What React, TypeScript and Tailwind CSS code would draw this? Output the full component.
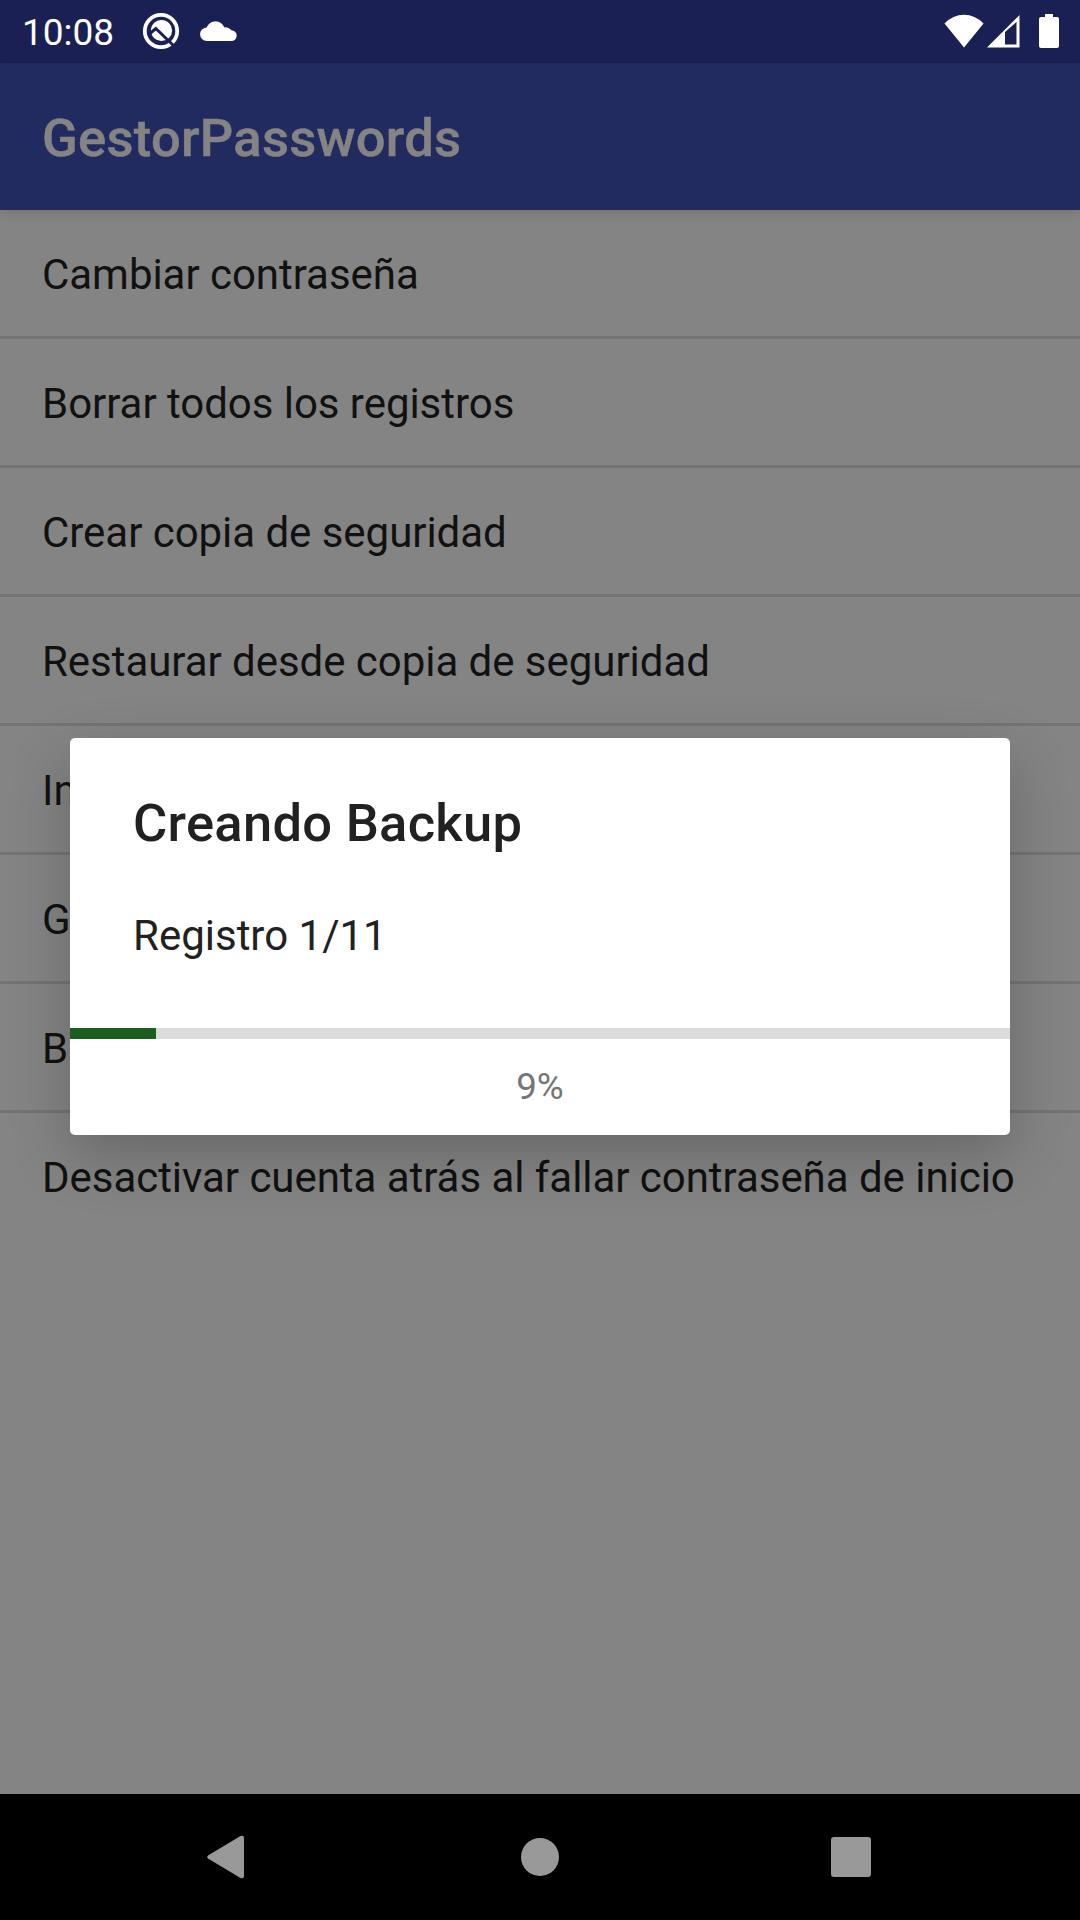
type Option = {
  id: number;
  label: string;
};

const options: Option[] = [
  { id: 1, label: "Cambiar contraseña" },
  { id: 2, label: "Borrar todos los registros" },
  { id: 3, label: "Crear copia de seguridad" },
  { id: 4, label: "Restaurar desde copia de seguridad" },
  { id: 5, label: "In" },
  { id: 6, label: "G" },
  { id: 7, label: "B" },
  { id: 8, label: "Desactivar cuenta atrás al fallar contraseña de inicio" },
];

const StatusBar = () => {
  return (
    <div className="flex h-[63px] items-center justify-between bg-[#1a2053] pl-[22px] pr-[21px] text-white">
      <div className="flex items-center">
        <span className="w-[92px] whitespace-nowrap pt-0.5 text-[37px] leading-[63px]">10:08</span>
        <svg className="mb-0.5 ml-[28px] h-[38px] w-[38px]" viewBox="0 0 38 38" fill="none">
          <circle cx="19" cy="19" r="16.2" stroke="#fff" strokeWidth="3.8" />
          <circle cx="19.5" cy="18.5" r="10.6" fill="#fff" />
          <path d="M8 21.5L13.8 16.5L31.5 33.5" stroke="#1a2053" strokeWidth="3" />
        </svg>
        <svg className="mb-px ml-[20px] h-[20px] w-[37px]" viewBox="0 0 37 20" fill="#fff">
          <circle cx="6.8" cy="13.3" r="6.7" />
          <circle cx="15.5" cy="9.6" r="9.4" />
          <circle cx="25.5" cy="13" r="6.8" />
          <circle cx="31.3" cy="14.6" r="5.4" />
          <path d="M6.8 12h24.5v8H6.8z" />
        </svg>
      </div>
      <div className="mb-0.5 flex items-center">
        <svg className="h-[34px] w-[40px]" viewBox="0 0 40 34" fill="#fff">
          <path d="M0.5 9.5Q9 0.8 20 0.8T39.5 9.5L20 33.5z" />
        </svg>
        <svg className="ml-[3px] h-[34px] w-[33px]" viewBox="0 0 33 34">
          <path d="M0 33.5L32.5 1v32.5zM18 18v12.5h11.5V8z" fill="#fff" fillRule="evenodd" />
        </svg>
        <svg className="ml-[19px] h-[34px] w-[20px]" viewBox="0 0 20 34" fill="#fff">
          <path d="M6 0h8v3h4a2 2 0 0 1 2 2v27a2 2 0 0 1-2 2H2a2 2 0 0 1-2-2V5a2 2 0 0 1 2-2h4z" />
        </svg>
      </div>
    </div>
  );
};

const ProgressDialog = ({ current, total }: { current: number; total: number }) => {
  const progress = (current / total) * 100;

  return (
    <div className="absolute left-[70px] top-[738px] flex h-[397px] w-[940px] flex-col overflow-hidden rounded-[5px] bg-white shadow-[0_20px_60px_rgba(0,0,0,0.22)]">
      <h2 className="mt-[49px] pl-[63px] text-[52.5px] font-medium leading-[72px] tracking-[0.28px] text-[#212121]">
        Creando Backup
      </h2>
      <p className="mt-[49px] pl-[63px] text-[42px] leading-[56px] text-[#212121]">
        Registro {current}/{total}
      </p>
      <div className="mt-[64px] h-[11px] bg-[#dbdbdb]">
        <div className="h-full min-w-[86px] bg-[#1b5e20]" style={{ width: `${progress}%` }} />
      </div>
      <p className="mt-[23px] text-center text-[36.75px] leading-[50px] text-[#757575]">
        {Math.round(progress)}%
      </p>
    </div>
  );
};

const NavigationBar = () => {
  return (
    <div className="flex h-[126px] items-center justify-between bg-black pl-[207px] pr-[209px]">
      <svg className="h-[44px] w-[38px]" viewBox="0 0 38 44" fill="#999">
        <path d="M1 20.5L33.5 1Q37 0 37 3V41Q37 44 33.5 43L1 23.5Q-.5 22 1 20.5z" />
      </svg>
      <div className="ml-1 h-[38px] w-[38px] rounded-full bg-[#999]" />
      <div className="h-10 w-10 rounded-[3px] bg-[#999]" />
    </div>
  );
};

const App = () => {
  return (
    <div className="relative flex h-[1920px] w-[1080px] flex-col overflow-hidden bg-[#848484] font-['Roboto',sans-serif]">
      <StatusBar />
      <header className="z-0 flex h-[147px] items-center bg-[#222b5f] pl-[42px] pt-0.5 shadow-[0_3px_9px_rgba(0,0,0,0.12)]">
        <h1 className="text-[52.5px] font-medium leading-[70px] tracking-[0.28px] text-[#848484] [-webkit-text-stroke:0.5px_#848484]">
          GestorPasswords
        </h1>
      </header>
      <ul className="flex-1 divide-y-3 divide-[#747474]">
        {options.map((option) => (
          <li
            key={option.id}
            className="box-content flex h-[124px] items-center whitespace-nowrap pl-[42px] pt-0.5 text-[42px] tracking-[-0.04px] text-[#111]"
          >
            {option.label}
          </li>
        ))}
      </ul>
      <NavigationBar />
      <ProgressDialog current={1} total={11} />
    </div>
  );
};

export default App;
